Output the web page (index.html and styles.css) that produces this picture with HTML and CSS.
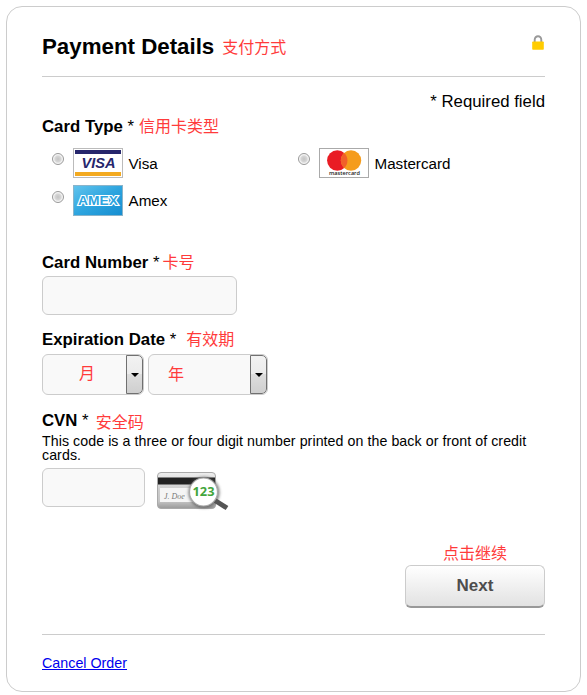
FILE: index.html
```html
<!DOCTYPE html>
<html lang="en">
<head>
  <meta charset="UTF-8" />
  <title>Payment Details</title>
  <link rel="stylesheet" href="styles.css">
</head>
<body>
  <form class="panel">
    <div class="header">
      <h1>Payment Details</h1>
      <span class="note">支付方式</span>
      <svg class="lock" width="12" height="15" viewBox="0 0 12 15">
        <path d="M2.7 8V4.8a3.3 3.6 0 0 1 6.6 0V8" fill="none" stroke="#999" stroke-width="1.9" />
        <rect x="0.2" y="6.5" width="11.6" height="8.3" rx="0.8" fill="#fc0" />
      </svg>
    </div>

    <p class="required">* Required field</p>

    <div class="label">Card Type <b>*</b><span class="note note-type">信用卡类型</span></div>
    <div class="cards">
      <label class="card">
        <input type="radio" name="card">
        <svg width="50" height="30" viewBox="0 0 50 30">
          <rect x=".5" y=".5" width="49" height="29" fill="#fff" stroke="#bbb" />
          <rect x="2" y="2" width="46" height="4" fill="#26266c" />
          <rect x="2" y="24" width="46" height="4" fill="#f3aa20" />
          <text x="8.5" y="20.3" textLength="34" lengthAdjust="spacingAndGlyphs" class="visa">VISA</text>
        </svg>
        <span>Visa</span>
      </label>
      <label class="card">
        <input type="radio" name="card">
        <svg width="50" height="30" viewBox="0 0 50 30">
          <rect x=".5" y=".5" width="49" height="29" fill="#fff" stroke="#aaa" />
          <circle cx="18.3" cy="12.5" r="10.2" fill="#e91c24" />
          <circle cx="32" cy="12.5" r="10.2" fill="#f59c1c" />
          <path d="M25.15 5a10.2 10.2 0 0 1 0 15a10.2 10.2 0 0 1 0-15z" fill="#f1602a" />
          <text x="10" y="27.3" textLength="31" lengthAdjust="spacingAndGlyphs" class="mc">mastercard</text>
        </svg>
        <span>Mastercard</span>
      </label>
      <label class="card amex-card">
        <input type="radio" name="card">
        <svg width="50" height="31" viewBox="0 0 50 31">
          <defs>
            <linearGradient id="amex" x1="0" y1="0" x2="1" y2="1">
              <stop offset="0" stop-color="#62c4ed" />
              <stop offset=".5" stop-color="#2ea5df" />
              <stop offset="1" stop-color="#158dd0" />
            </linearGradient>
          </defs>
          <rect x=".5" y=".5" width="49" height="30" fill="url(#amex)" stroke="#8ab4ca" />
          <text x="5" y="20" textLength="40" lengthAdjust="spacingAndGlyphs" class="amex">AMEX</text>
        </svg>
        <span>Amex</span>
      </label>
    </div>

    <div class="label">Card Number <b>*</b><span class="note note-number">卡号</span></div>
    <input type="text" class="field number">

    <div class="label label-date">Expiration Date <b>*</b><span class="note note-date">有效期</span></div>
    <div class="dates">
      <div class="select month">
        <select><option>月</option></select>
        <span class="arrow"></span>
      </div>
      <div class="select year">
        <select><option>年</option></select>
        <span class="arrow"></span>
      </div>
    </div>

    <div class="label label-cvn">CVN <b>*</b><span class="note note-cvn">安全码</span></div>
    <p class="help">This code is a three or four digit number printed on the back or front of credit cards.</p>
    <div class="cvn-row">
      <input type="text" class="field cvn">
      <svg class="cvn-card" width="78" height="44" viewBox="0 0 78 44">
        <defs>
          <linearGradient id="plastic" x1="0" y1="0" x2="0" y2="1">
            <stop offset="0" stop-color="#eee" />
            <stop offset=".5" stop-color="#ccc" />
            <stop offset=".8" stop-color="#c4c4c4" />
            <stop offset="1" stop-color="#999" />
          </linearGradient>
          <filter id="shade" x="-30%" y="-30%" width="160%" height="160%">
            <feGaussianBlur stdDeviation="1.6" />
          </filter>
        </defs>
        <rect x="2.5" y="4.5" width="58" height="36" rx="3.5" fill="url(#plastic)" stroke="#aaa" />
        <rect x="3" y="9.5" width="57" height="7" fill="#222" />
        <rect x="5" y="20" width="34" height="14" fill="#f5f5f5" />
        <text x="9" y="31" class="sign">J. Doe</text>
        <circle cx="49" cy="24.5" r="15.5" fill="#555" opacity=".75" filter="url(#shade)" />
        <path d="M60 32.5l12 7.5" stroke="#555" stroke-width="5" />
        <circle cx="48.5" cy="24" r="14" fill="#fff" stroke="#aaa" stroke-width="1.2" />
        <text x="37.5" y="28.2" textLength="22" lengthAdjust="spacingAndGlyphs" class="digits">123</text>
      </svg>
    </div>

    <div class="actions">
      <span class="note">点击继续</span>
      <button type="button">Next</button>
    </div>

    <div class="footer">
      <a href="#">Cancel Order</a>
    </div>
  </form>
</body>
</html>
```

FILE: styles.css
```css
* {
  box-sizing: border-box;
}
body {
  margin: 0;
  padding: 6px;
  background: #fff;
  color: #000;
  font-family: "Liberation Sans", "Noto Sans CJK SC", sans-serif;
}
.panel {
  width: 575px;
  height: 686px;
  padding: 0 35px;
  border: 1px solid #ccc;
  border-radius: 16px;
}
.header {
  display: flex;
  height: 70px;
  padding-top: 25px;
  border-bottom: 1px solid #ccc;
}
h1 {
  margin: 0;
  font-size: 22.3px;
  line-height: 30px;
}
.note {
  color: #ff3b3b;
  font-family: "Noto Sans CJK SC", sans-serif;
  font-size: 16px;
  font-weight: 400;
  line-height: 20px;
}
.header .note {
  margin: 4px 0 0 8px;
}
.lock {
  margin: 3px 1px 0 auto;
}
.required {
  margin: 15px 0 0;
  font-size: 16.8px;
  line-height: 20px;
  text-align: right;
}
.label {
  display: flex;
  height: 22px;
  margin-top: 3px;
  padding-top: 1px;
  font-size: 16.8px;
  font-weight: bold;
  line-height: 22px;
  white-space: pre;
}
.label b {
  font-weight: normal;
}
.label .note {
  margin-top: -1px;
}
.note-type {
  margin-left: 5px;
}
.note-number {
  margin-left: 3px;
}
.note-date {
  margin-left: 10px;
}
.label .note-cvn {
  margin: 1px 0 0 7px;
}
.cards {
  display: grid;
  grid-template-columns: 246px 1fr;
  grid-template-rows: 30px 31px;
  row-gap: 7px;
  height: 100px;
  margin-top: 11px;
  padding-left: 10px;
}
.card {
  display: flex;
  align-items: center;
  font-size: 15.2px;
}
.card input {
  appearance: none;
  width: 12px;
  height: 12px;
  margin: 0 9px 8px 0;
  border: 1px solid #999;
  border-radius: 50%;
  background: radial-gradient(circle, #c4c4c4 0, #d5d5d5 40%, #f7f7f7 65%);
}
.card span {
  margin: 1px 0 0 5.5px;
}
.amex-card span {
  margin-top: -1px;
}
.visa {
  fill: #26266c;
  font: italic bold 15.5px "Liberation Sans", sans-serif;
}
.mc {
  fill: #222;
  font: 600 5.6px "Open Sans", sans-serif;
}
.amex {
  fill: #2ea5df;
  stroke: #fff;
  stroke-width: 2.2px;
  paint-order: stroke;
  font: bold 12px "Liberation Sans", sans-serif;
}
.field {
  display: block;
  height: 39px;
  border: 1px solid #ccc;
  border-radius: 6px;
  background: #f9f9f9;
}
.number {
  width: 195px;
  margin-top: 3px;
}
.label-date {
  margin-top: 13px;
}
.dates {
  display: flex;
  gap: 4px;
  margin-top: 4px;
}
.select {
  display: flex;
  height: 41px;
  border: 1px solid #ccc;
  border-radius: 6px;
  background: #f9f9f9;
  overflow: hidden;
}
.month {
  width: 102px;
}
.year {
  width: 120px;
}
select {
  appearance: none;
  flex: 1;
  min-width: 0;
  padding: 0 0 5px 36px;
  border: 0;
  background: none;
  color: #ff3b3b;
  font: 400 16px "Noto Sans CJK SC", sans-serif;
}
.year select {
  padding: 0 0 3px 19px;
}
.arrow {
  display: flex;
  align-items: center;
  justify-content: center;
  width: 17px;
  border: 1px solid #707070;
  border-radius: 0 5px 5px 0;
  background: linear-gradient(#f2f2f2, #ebebeb 50%, #ddd 50%, #cfcfcf);
}
.arrow::after {
  content: "";
  border: 4px solid transparent;
  border-top-color: #000;
  border-bottom: 0;
}
.label-cvn {
  margin-top: 14px;
}
.help {
  margin: 3px 0 0;
  font-size: 14.2px;
  letter-spacing: 0.07px;
  line-height: 14px;
}
.cvn-row {
  display: flex;
  margin-top: 6px;
}
.cvn {
  width: 103px;
}
.cvn-card {
  margin-left: 10px;
}
.sign {
  fill: #777;
  font: italic 8px "Liberation Serif", serif;
}
.digits {
  fill: #43a53c;
  font: bold 13px "Open Sans", sans-serif;
}
.actions {
  display: flex;
  flex-direction: column;
  align-items: center;
  width: 140px;
  margin: 30px 0 26px auto;
}
button {
  width: 140px;
  height: 43px;
  margin-top: 3px;
  padding: 0;
  border: 1px solid #ccc;
  border-bottom: 2px solid #999;
  border-radius: 6px;
  background: linear-gradient(#fff, #e2e2e2);
  color: #4d4d4d;
  font: bold 17px "Liberation Sans", sans-serif;
}
.footer {
  padding-top: 20px;
  border-top: 1px solid #ccc;
  font-size: 14.3px;
  line-height: 16px;
}
.footer a {
  color: #00e;
}
```
